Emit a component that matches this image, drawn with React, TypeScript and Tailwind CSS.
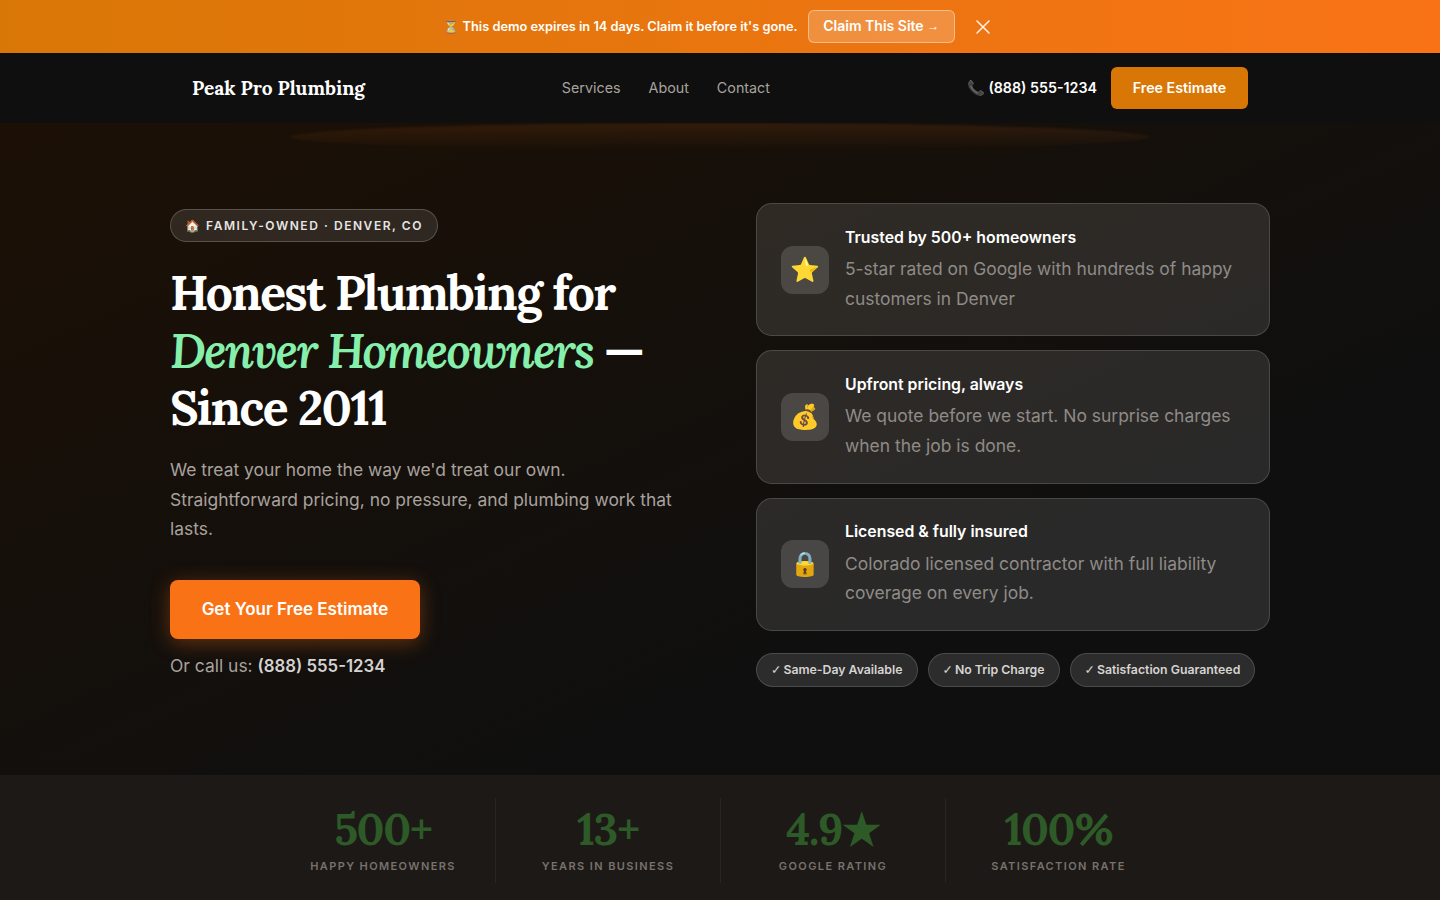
import { X } from 'lucide-react'

const SERIF = "font-['Lora','Liberation_Serif',serif]"

const CARDS = [
  { icon: '⭐', title: 'Trusted by 500+ homeowners', text: '5-star rated on Google with hundreds of happy customers in Denver' },
  { icon: '💰', title: 'Upfront pricing, always', text: 'We quote before we start. No surprise charges when the job is done.' },
  { icon: '🔒', title: 'Licensed & fully insured', text: 'Colorado licensed contractor with full liability coverage on every job.' },
]

const PILLS = ['Same-Day Available', 'No Trip Charge', 'Satisfaction Guaranteed']

const STATS = [
  { value: '500+', label: 'Happy Homeowners' },
  { value: '13+', label: 'Years in Business' },
  { value: '4.9★', label: 'Google Rating' },
  { value: '100%', label: 'Satisfaction Rate' },
]

export default function App() {
  return (
    <div className="min-h-[900px] bg-[#0f0f0f] font-['Inter','Liberation_Sans',sans-serif] text-white">
      {/* Banner */}
      <div className="flex h-[53px] items-center justify-center gap-2.5 bg-gradient-to-r from-[#d97706] to-[#f97316] pr-[2px]">
        <span className="text-[12.8px] font-semibold">⏳ This demo expires in 14 days. Claim it before it's gone.</span>
        <button className="flex h-[33px] w-[147px] items-center justify-center rounded-md border border-white/40 bg-white/20 pb-0.5 text-[14px] font-semibold">
          Claim This Site&nbsp;<span className="font-['Liberation_Sans',sans-serif] text-[12px] font-normal">→</span>
        </button>
        <button className="ml-1.5 flex h-6 w-6 items-center justify-center text-white/90">
          <X size={24} strokeWidth={1.5} />
        </button>
      </div>

      {/* Nav */}
      <nav className="bg-[#0f0f0f]">
        <div className="mx-auto flex h-[70px] w-[1056px] items-center justify-between">
          <div className={`${SERIF} text-[19.1px] font-bold`}>Peak Pro Plumbing</div>
          <div className="flex gap-7 text-[14.3px] text-[#a8a29e]">
            <a>Services</a>
            <a>About</a>
            <a>Contact</a>
          </div>
          <div className="flex items-center gap-3.5">
            <span className="text-[14.25px] font-semibold">
              <span className="text-[#57534e]">📞</span> (888) 555-1234
            </span>
            <button className="flex h-[42px] w-[137px] items-center justify-center rounded-md bg-[#d97706] text-[14.25px] font-semibold">
              Free Estimate
            </button>
          </div>
        </div>
      </nav>

      {/* Hero */}
      <section className="relative overflow-hidden bg-gradient-to-br from-[#1c1005] to-[#0f0f0f] to-[70%] pt-20 pb-[88px]">
        <div className="absolute top-0 left-[290px] h-[28px] w-[860px] rounded-[50%] bg-gradient-to-b from-[#f97316]/12 to-transparent blur-[1px]" />
        <div className="relative mx-auto grid w-[1100px] grid-cols-2 items-center gap-[72px]">
          <div className="pb-[0.5px]">
            <div className="inline-flex h-[33px] items-center rounded-full border border-white/20 bg-white/10 px-3.5 text-[12px] font-semibold tracking-[1.55px] text-[#e7e5e4]">
              🏠 FAMILY-OWNED · DENVER, CO
            </div>
            <h1 className={`${SERIF} mt-[22px] text-[48px] leading-[57.5px] font-bold tracking-[-1.7px]`}>
              Honest Plumbing for{' '}
              <em className="font-semibold tracking-[-1.88px] text-[#86efac]">Denver Homeowners</em> — Since 2011
            </h1>
            <p className="mt-[18px] text-[17.45px] leading-[29.7px] text-[#a8a29e]">
              We treat your home the way we'd treat our own. Straightforward pricing, no pressure, and plumbing work
              that lasts.
            </p>
            <button className="mt-9 flex h-[59px] w-[250px] items-center justify-center rounded-lg bg-[#f97316] text-[17px] font-semibold shadow-[0_4px_20px_rgba(249,115,22,0.35)]">
              Get Your Free Estimate
            </button>
            <p className="mt-[13px] text-[17.45px] leading-[27px] text-[#a8a29e]">
              Or call us: <strong className="text-[16.8px] font-semibold text-[#d6d3d1]">(888) 555-1234</strong>
            </p>
          </div>

          <div>
            <div className="flex flex-col gap-3.5">
              {CARDS.map((c) => (
                <div
                  key={c.title}
                  className="flex items-center gap-4 rounded-2xl border border-white/[0.15] bg-white/[0.11] px-6 py-[20.68px]"
                >
                  <div className="flex h-12 w-12 shrink-0 items-center justify-center rounded-xl bg-white/[0.14] text-[24px]">
                    {c.icon}
                  </div>
                  <div className="pb-[0.8px]">
                    <div className="text-[15.85px] leading-[26.2px] font-semibold">{c.title}</div>
                    <div className="mt-[3.1px] text-[17.45px] leading-[29.92px] text-[#8f8b87]">{c.text}</div>
                  </div>
                </div>
              ))}
            </div>
            <div className="mt-[22.1px] flex gap-2.5">
              {PILLS.map((p) => (
                <span
                  key={p}
                  className="flex h-[34px] items-center rounded-full border border-white/[0.15] bg-white/[0.12] px-3.5 text-[12.3px] font-semibold whitespace-nowrap text-[#d6d3d1]"
                >
                  <span className="mr-[2px] font-['DejaVu_Sans',sans-serif] text-[12.4px]">✓</span>
                  {p}
                </span>
              ))}
            </div>
          </div>
        </div>
      </section>

      {/* Stats */}
      <section className="flex h-[125px] items-start justify-center bg-[#1c1917] pt-[23px] pl-0.5">
        {STATS.map((s, i) => (
          <div
            key={s.label}
            className={`flex h-[85px] w-[225px] flex-col items-center pt-[5px] ${i < 3 ? 'border-r border-[#292524]' : ''}`}
          >
            <div className={`${SERIF} text-[44px] leading-[52px] font-bold tracking-[-1.35px] text-[#2d5a27]`}>
              {s.value}
            </div>
            <div className="mt-[3px] text-[11px] font-semibold tracking-[1.4px] text-[#78716c] uppercase">{s.label}</div>
          </div>
        ))}
      </section>
    </div>
  )
}
